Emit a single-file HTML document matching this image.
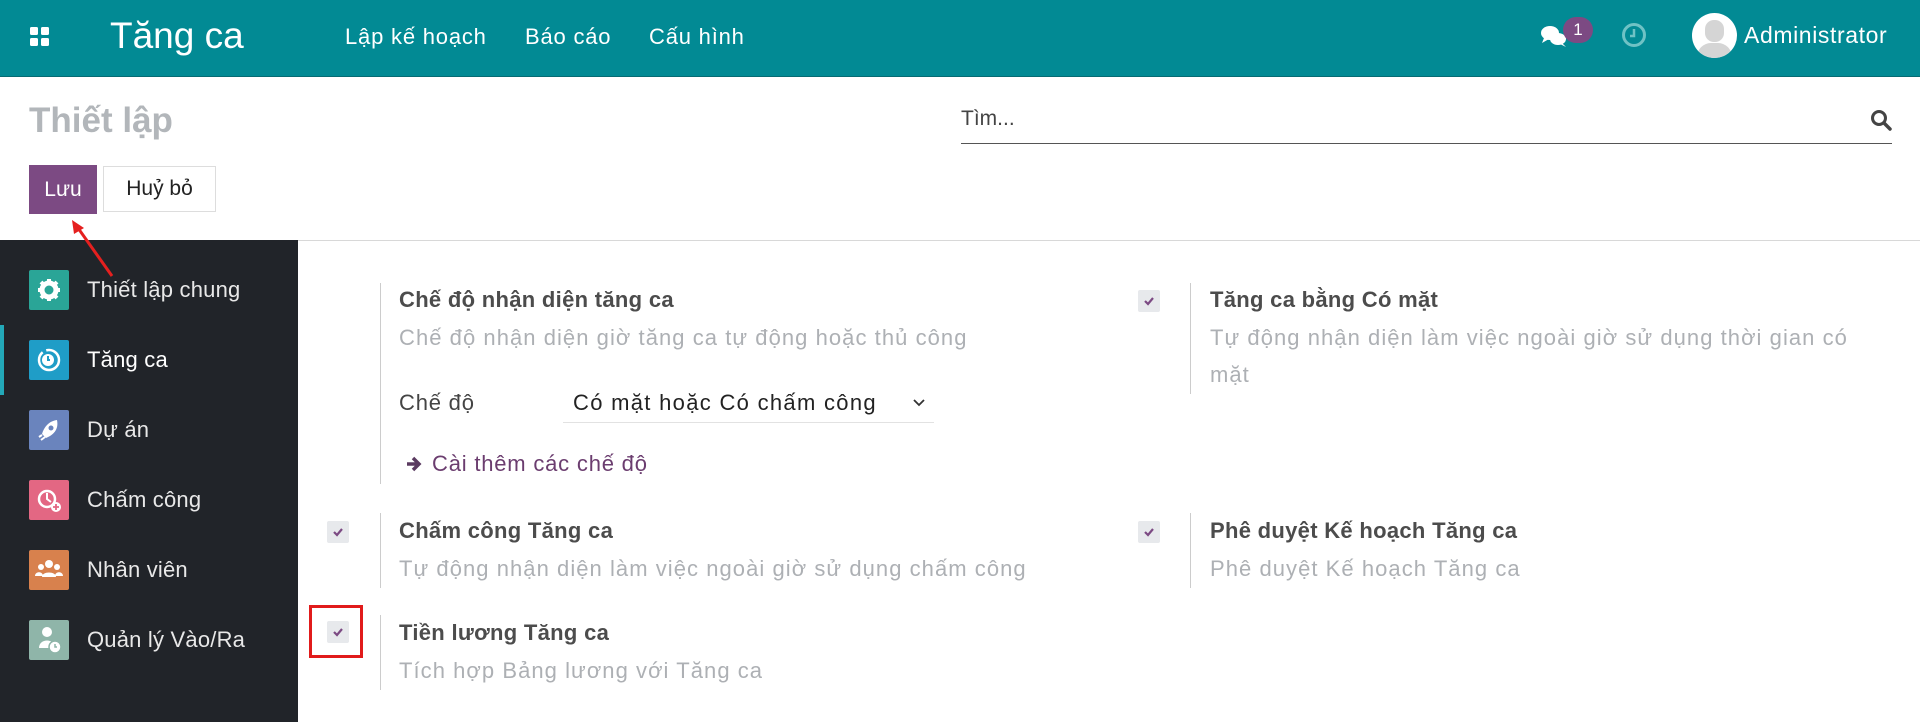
<!DOCTYPE html>
<html><head><meta charset="utf-8">
<style>
*{box-sizing:border-box;margin:0;padding:0}
body{width:1920px;height:722px;overflow:hidden;background:#fff;font-family:"Liberation Sans","Noto Sans CJK SC",sans-serif;position:relative;color:#4c4c4c}
.abs{position:absolute;white-space:nowrap}
.nav{position:absolute;left:0;top:0;width:1920px;height:77px;background:#028a94;border-bottom:1px solid #066b73}
.nav .t{color:#fff}
.side{position:absolute;left:0;top:240px;width:298px;height:482px;background:#212429}
.ic{position:absolute;left:29px;width:40px;height:40px;border-radius:2px}
.sl{position:absolute;left:87px;font-size:22px;color:#e8e8e8;line-height:26px;letter-spacing:0.2px}
.ttl{font-size:22px;font-weight:bold;color:#4c4c4c;letter-spacing:0.3px}
.dsc{font-size:22px;color:#adb0b4;letter-spacing:1.05px}
.vl{position:absolute;width:1px;background:#ccc}
.cb{position:absolute;width:22px;height:22px;background:#e7e9ec;border-radius:2px}
.cb svg{position:absolute;left:5px;top:5px}
</style></head><body>
<div class="nav">
 <svg class="abs" style="left:30px;top:27px" width="20" height="20"><rect x="0" y="0" width="8" height="8" rx="1.5" fill="#fff"/><rect x="11" y="0" width="8" height="8" rx="1.5" fill="#fff"/><rect x="0" y="11" width="8" height="8" rx="1.5" fill="#fff"/><rect x="11" y="11" width="8" height="8" rx="1.5" fill="#fff"/></svg>
 <div class="abs t" style="left:110px;top:15px;font-size:37px">Tăng ca</div>
 <div class="abs t" style="left:345px;top:24px;font-size:22px;letter-spacing:0.8px">Lập kế hoạch</div>
 <div class="abs t" style="left:525px;top:24px;font-size:22px;letter-spacing:0.8px">Báo cáo</div>
 <div class="abs t" style="left:649px;top:24px;font-size:22px;letter-spacing:0.8px">Cấu hình</div>
 <svg class="abs" style="left:1540px;top:22px" width="30" height="28"><ellipse cx="10" cy="11" rx="9" ry="7" fill="#fff"/><path d="M4 16 L2 21 L9 17Z" fill="#fff"/><ellipse cx="18" cy="17" rx="8" ry="6" fill="#fff"/><path d="M22 21 L26 25 L20 22Z" fill="#fff"/></svg>
 <div class="abs" style="left:1563px;top:17px;width:30px;height:26px;border-radius:13px;background:#7c4a83;color:#fff;font-size:17px;text-align:center;line-height:26px">1</div>
 <svg class="abs" style="left:1621px;top:22px" width="26" height="26"><circle cx="13" cy="13" r="10.5" fill="none" stroke="#6fc2c5" stroke-width="3"/><path d="M13 7 V14 H9" fill="none" stroke="#6fc2c5" stroke-width="2.5"/></svg>
 <div class="abs" style="left:1692px;top:13px;width:45px;height:45px;border-radius:50%;background:#fff;overflow:hidden"><div style="position:absolute;left:13px;top:7px;width:19px;height:22px;border-radius:9px;background:#d5d5d5"></div><div style="position:absolute;left:5px;top:30px;width:35px;height:20px;border-radius:14px 14px 0 0;background:#d5d5d5"></div></div>
 <div class="abs t" style="left:1744px;top:22px;font-size:23px;letter-spacing:0.6px">Administrator</div>
</div>

<div class="abs" style="left:29px;top:101px;font-size:35px;font-weight:bold;color:#b2b6ba">Thiết lập</div>
<div class="abs" style="left:961px;top:107px;font-size:21px;color:#444">Tìm...</div>
<svg class="abs" style="left:1870px;top:109px" width="22" height="22"><circle cx="9" cy="9" r="6.5" fill="none" stroke="#444" stroke-width="3"/><path d="M14 14 L20 20" stroke="#444" stroke-width="3.5" stroke-linecap="round"/></svg>
<div class="abs" style="left:961px;top:143px;width:931px;height:1px;background:#555"></div>

<div class="abs" style="left:29px;top:165px;width:68px;height:49px;background:#7c4a83;color:#fff;font-size:21px;text-align:center;line-height:49px">Lưu</div>
<div class="abs" style="left:103px;top:166px;width:113px;height:46px;border:1px solid #ddd;color:#222;font-size:21px;text-align:center;line-height:44px">Huỷ bỏ</div>
<div class="abs" style="left:0;top:240px;width:1920px;height:1px;background:#d8d8d8"></div>

<div class="side">
 <div style="position:absolute;left:0;top:85px;width:4px;height:70px;background:#23a8b8"></div>
 <div class="ic" style="top:30px;background:#2aa597"><svg width="40" height="40"><circle cx="20" cy="20" r="7" fill="none" stroke="#fff" stroke-width="5"/><g stroke="#fff" stroke-width="4"><path d="M20 9v4M20 27v4M9 20h4M27 20h4M12 12l3 3M25 25l3 3M12 28l3-3M25 15l3-3"/></g></svg></div>
 <div class="sl" style="top:37px">Thiết lập chung</div>
 <div class="ic" style="top:100px;background:#1f9dc7"><svg width="40" height="40"><circle cx="20" cy="20" r="10" fill="none" stroke="#fff" stroke-width="2.5" stroke-dasharray="40 4"/><circle cx="19" cy="20" r="6" fill="#fff"/><path d="M19 16v4h2" stroke="#1f9dc7" stroke-width="2" fill="none"/></svg></div>
 <div class="sl" style="top:107px;color:#fff">Tăng ca</div>
 <div class="ic" style="top:170px;background:#6a84bd"><svg width="40" height="40"><path d="M28 10 C20 11 15 17 13 24 L17 28 C24 25 30 20 28 10Z" fill="#fff"/><circle cx="22" cy="18" r="2.5" fill="#6a84bd"/><path d="M12 30l4-3M10 27l3-2" stroke="#fff" stroke-width="2"/></svg></div>
 <div class="sl" style="top:177px">Dự án</div>
 <div class="ic" style="top:240px;background:#e36783"><svg width="40" height="40"><circle cx="18" cy="19" r="8" fill="none" stroke="#fff" stroke-width="2.5"/><path d="M18 13v6l4 3" stroke="#fff" stroke-width="2" fill="none"/><circle cx="27" cy="27" r="5" fill="#fff"/><path d="M27 24v6M24 27h6" stroke="#e36783" stroke-width="1.8"/></svg></div>
 <div class="sl" style="top:247px">Chấm công</div>
 <div class="ic" style="top:310px;background:#d8814d"><svg width="40" height="40"><circle cx="20" cy="14" r="4" fill="#fff"/><circle cx="12" cy="17" r="3" fill="#fff"/><circle cx="28" cy="17" r="3" fill="#fff"/><path d="M13 27c0-6 14-6 14 0Z M6 26c0-5 8-5 8 0Z M26 26c0-5 8-5 8 0Z" fill="#fff"/></svg></div>
 <div class="sl" style="top:317px">Nhân viên</div>
 <div class="ic" style="top:380px;background:#8fb5a9"><svg width="40" height="40"><circle cx="18" cy="12" r="5" fill="#fff"/><path d="M10 28c0-10 16-10 16 0Z" fill="#fff"/><circle cx="26" cy="27" r="6" fill="#fff" stroke="#8fb5a9" stroke-width="1.5"/><path d="M26 24v3h2" stroke="#8fb5a9" stroke-width="1.5" fill="none"/></svg></div>
 <div class="sl" style="top:387px">Quản lý Vào/Ra</div>
</div>

<svg class="abs" style="left:60px;top:210px" width="60" height="72"><path d="M52 66 L18 18" stroke="#e5201f" stroke-width="3"/><path d="M12 10 L24 18 L14 24Z" fill="#e5201f"/></svg>

<div class="vl" style="left:380px;top:283px;height:201px"></div>
<div class="abs ttl" style="left:399px;top:287px">Chế độ nhận diện tăng ca</div>
<div class="abs dsc" style="left:399px;top:325px">Chế độ nhận diện giờ tăng ca tự động hoặc thủ công</div>
<div class="abs" style="left:399px;top:390px;font-size:22px;color:#444;letter-spacing:0.8px">Chế độ</div>
<div class="abs" style="left:573px;top:390px;font-size:22px;color:#222;letter-spacing:1.3px">Có mặt hoặc Có chấm công</div>
<svg class="abs" style="left:912px;top:398px" width="14" height="10"><path d="M2 2l5 5 5-5" stroke="#333" stroke-width="1.8" fill="none"/></svg>
<div class="abs" style="left:563px;top:422px;width:371px;height:1px;background:#e2e2e2"></div>
<svg class="abs" style="left:405px;top:455px" width="18" height="18"><path d="M2 9h10M8 3l6 6-6 6" stroke="#5a3a60" stroke-width="3.5" fill="none"/></svg>
<div class="abs" style="left:432px;top:451px;font-size:22px;color:#6b3d6f;letter-spacing:0.8px">Cài thêm các chế độ</div>

<div class="cb" style="left:1138px;top:290px"><svg width="12" height="12"><path d="M2 6l3 3 5-6" stroke="#7c4a83" stroke-width="2.2" fill="none"/></svg></div>
<div class="vl" style="left:1190px;top:283px;height:111px"></div>
<div class="abs ttl" style="left:1210px;top:287px">Tăng ca bằng Có mặt</div>
<div class="abs dsc" style="left:1210px;top:325px">Tự động nhận diện làm việc ngoài giờ sử dụng thời gian có</div>
<div class="abs dsc" style="left:1210px;top:362px">mặt</div>

<div class="cb" style="left:327px;top:521px"><svg width="12" height="12"><path d="M2 6l3 3 5-6" stroke="#7c4a83" stroke-width="2.2" fill="none"/></svg></div>
<div class="vl" style="left:380px;top:513px;height:75px"></div>
<div class="abs ttl" style="left:399px;top:518px">Chấm công Tăng ca</div>
<div class="abs dsc" style="left:399px;top:556px">Tự động nhận diện làm việc ngoài giờ sử dụng chấm công</div>
<div class="cb" style="left:1138px;top:521px"><svg width="12" height="12"><path d="M2 6l3 3 5-6" stroke="#7c4a83" stroke-width="2.2" fill="none"/></svg></div>
<div class="vl" style="left:1190px;top:513px;height:75px"></div>
<div class="abs ttl" style="left:1210px;top:518px">Phê duyệt Kế hoạch Tăng ca</div>
<div class="abs dsc" style="left:1210px;top:556px">Phê duyệt Kế hoạch Tăng ca</div>

<div class="cb" style="left:327px;top:621px"><svg width="12" height="12"><path d="M2 6l3 3 5-6" stroke="#7c4a83" stroke-width="2.2" fill="none"/></svg></div>
<div class="abs" style="left:309px;top:605px;width:54px;height:53px;border:3px solid #e11b1b"></div>
<div class="vl" style="left:380px;top:615px;height:75px"></div>
<div class="abs ttl" style="left:399px;top:620px">Tiền lương Tăng ca</div>
<div class="abs dsc" style="left:399px;top:658px">Tích hợp Bảng lương với Tăng ca</div>
</body></html>
